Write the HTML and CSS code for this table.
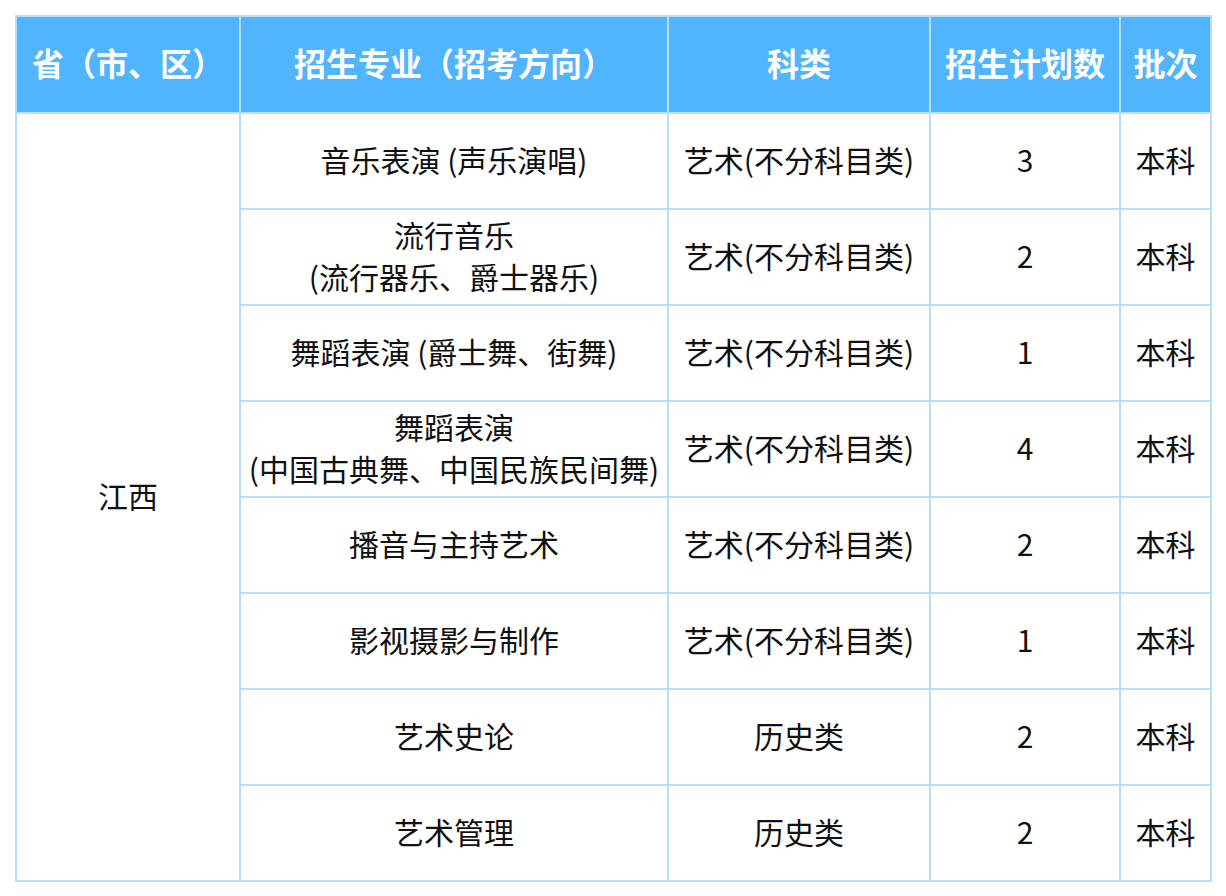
FILE: index.html
```html
<!DOCTYPE html>
<html lang="zh-CN">
<head>
<meta charset="utf-8">
<title>招生计划</title>
<link rel="stylesheet" href="styles.css">
</head>
<body>
<table class="plan">
  <colgroup>
    <col class="c1"><col class="c2"><col class="c3"><col class="c4"><col class="c5">
  </colgroup>
  <thead>
    <tr class="head">
      <th>省（市、区）</th>
      <th>招生专业（招考方向）</th>
      <th>科类</th>
      <th>招生计划数</th>
      <th>批次</th>
    </tr>
  </thead>
  <tbody>
    <tr>
      <td rowspan="8">江西</td>
      <td>音乐表演 (声乐演唱)</td>
      <td>艺术(不分科目类)</td>
      <td>3</td>
      <td>本科</td>
    </tr>
    <tr>
      <td>流行音乐<br>(流行器乐、爵士器乐)</td>
      <td>艺术(不分科目类)</td>
      <td>2</td>
      <td>本科</td>
    </tr>
    <tr>
      <td>舞蹈表演 (爵士舞、街舞)</td>
      <td>艺术(不分科目类)</td>
      <td>1</td>
      <td>本科</td>
    </tr>
    <tr>
      <td>舞蹈表演<br>(中国古典舞、中国民族民间舞)</td>
      <td>艺术(不分科目类)</td>
      <td>4</td>
      <td>本科</td>
    </tr>
    <tr>
      <td>播音与主持艺术</td>
      <td>艺术(不分科目类)</td>
      <td>2</td>
      <td>本科</td>
    </tr>
    <tr>
      <td>影视摄影与制作</td>
      <td>艺术(不分科目类)</td>
      <td>1</td>
      <td>本科</td>
    </tr>
    <tr>
      <td>艺术史论</td>
      <td>历史类</td>
      <td>2</td>
      <td>本科</td>
    </tr>
    <tr>
      <td>艺术管理</td>
      <td>历史类</td>
      <td>2</td>
      <td>本科</td>
    </tr>
  </tbody>
</table>
</body>
</html>
```

FILE: styles.css
```css
html, body {
  margin: 0;
  padding: 0;
  background: #ffffff;
}

body {
  padding: 15px 0 0 15px;
  font-family: "Noto Sans CJK SC", "Noto Sans", sans-serif;
}

.plan {
  border-collapse: collapse;
  table-layout: fixed;
  width: 1195px;
  border: 2px solid #50b4ff;
}

.c1 { width: 224px; }
.c2 { width: 428px; }
.c3 { width: 262px; }
.c4 { width: 190px; }
.c5 { width: 91px; }

.plan th,
.plan td {
  border: 2px solid #b5defb;
  text-align: center;
  vertical-align: middle;
  padding: 0 0 4px 0;
}

.plan .head {
  height: 97px;
  background: #50b4ff;
}

.plan th {
  color: #ffffff;
  font-size: 32px;
  font-weight: 700;
  white-space: nowrap;
  padding-bottom: 5px;
}

.plan tbody tr {
  height: 96px;
}

.plan td {
  color: #111111;
  font-size: 30px;
  line-height: 42px;
  white-space: nowrap;
}
```
